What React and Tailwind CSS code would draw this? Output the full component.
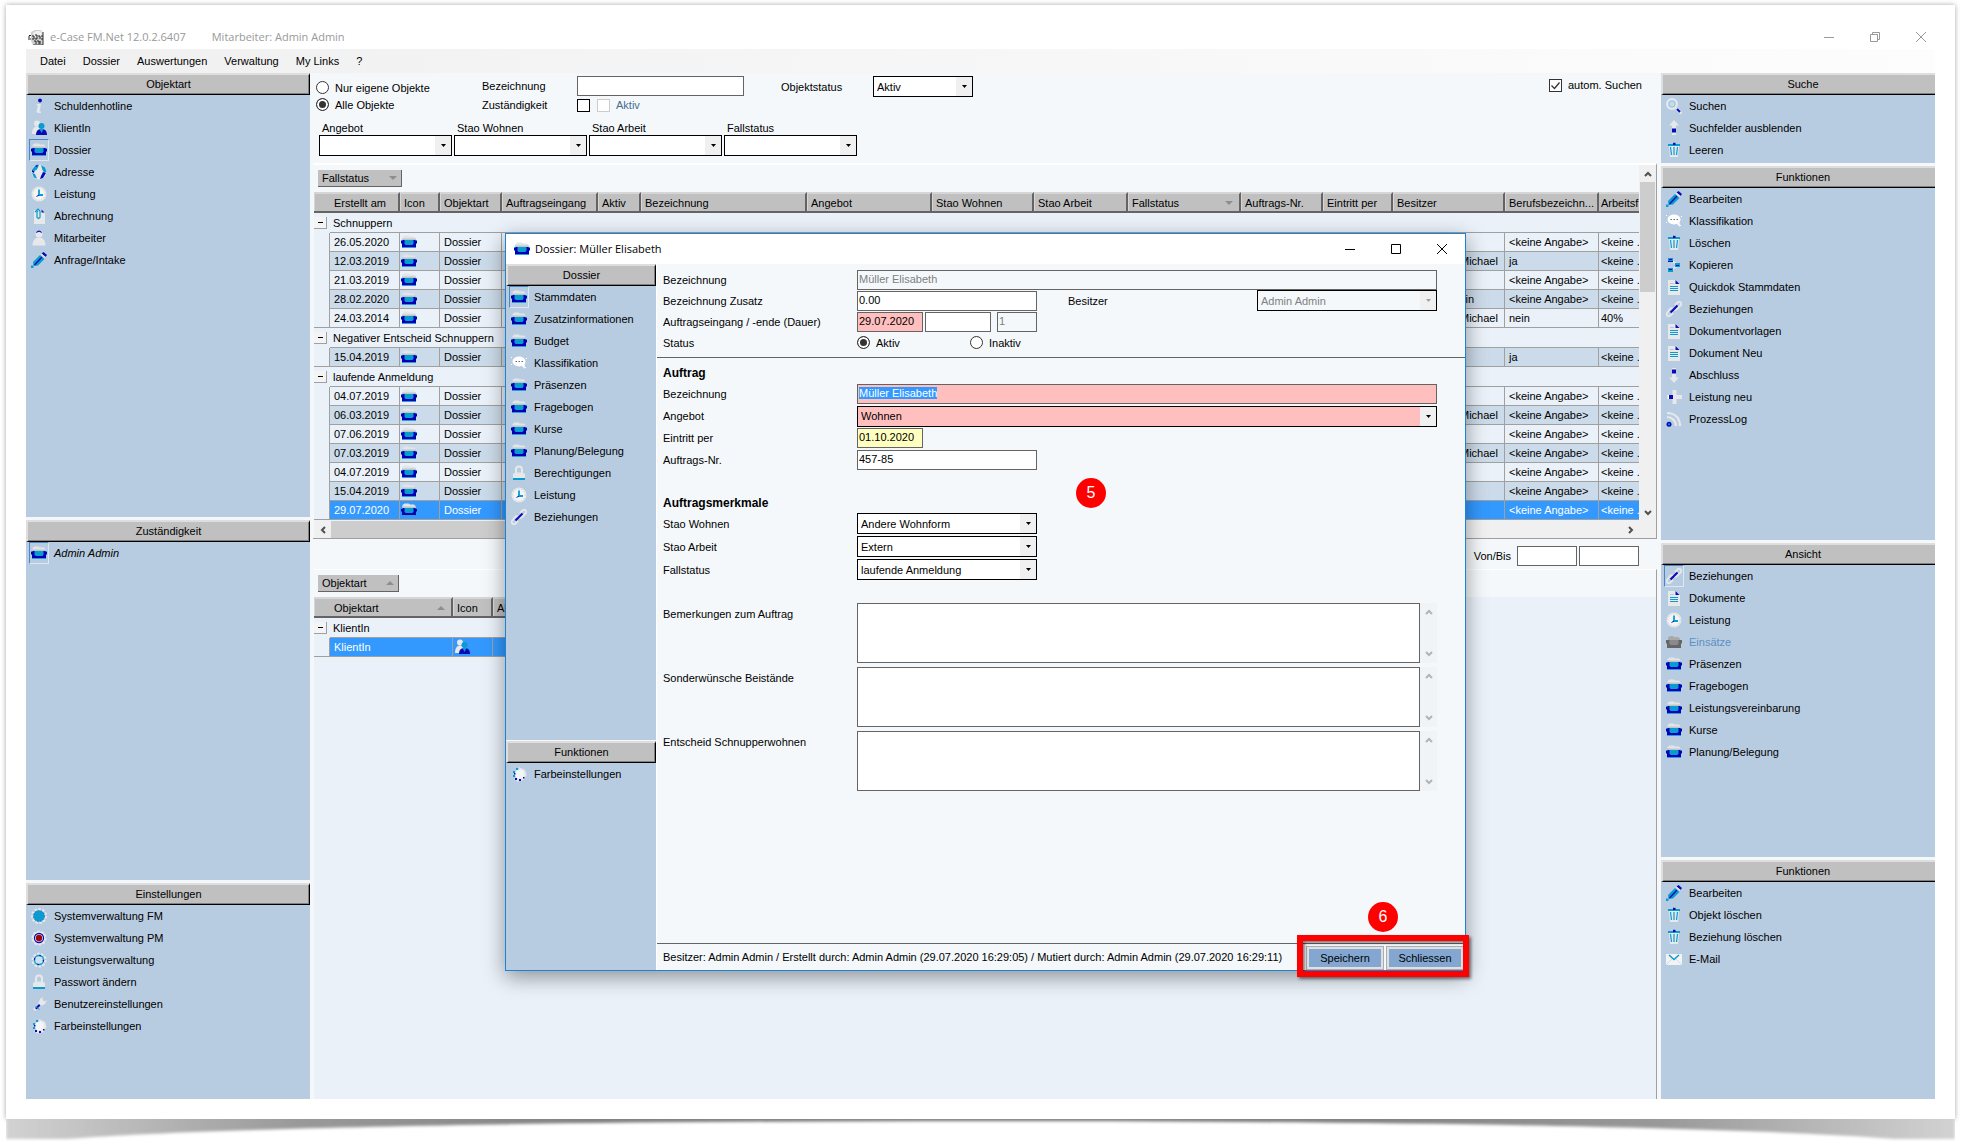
import { useEffect, useRef } from "react";

const INK = "#0a0ab8";
const CYAN = "#0a9bd0";
const PALE = "#e6e8ea";

const drawings = {
  folder: (
    <>
      <path d="M1.500 6V3L3.500 1.500h4L9 2.500h4L14.500 4v2z" fill="#e2e5e7" />
      <path d="M1 4.500h14V6H1z" fill="#c0c5c9" />
      <path d="M0 6h16v3.500h-1V14H1V9.500H0z" fill="#0000b4" />
      <path d="M3.500 6h9v3.500L11.500 11h-7l-1-1.500z" fill={CYAN} />
      <path d="M1 13h14v1H1zM0 6h1.500v1H0zM14.500 6H16v1h-1.500z" fill="#2e9bd8" />
    </>
  ),
  folderGrey: (
    <>
      <path d="M2 6V3.500L4 2h3l1 1h4l2 1.500V6z" fill="#a9a9a9" />
      <path d="M0 6h16v3.500h-1V14H1V9.500H0z" fill="#666" />
      <path d="M3.500 6h9v3.500L11.500 11h-7l-1-1.500z" fill="#8b8b8b" />
    </>
  ),
  info: (
    <>
      <circle cx="9" cy="2.500" r="1.900" fill={INK} />
      <path d="M6 6h4l-1.500 7.500H10V15H6.500l-1-1.500L7 7.500H5.500z" fill={PALE} />
    </>
  ),
  people: (
    <>
      <circle cx="6" cy="3.500" r="3" fill={PALE} />
      <path d="M1 14c0-5 2-7.500 5-7.500S10 9 10 14z" fill={PALE} />
      <circle cx="10.500" cy="6" r="3" fill={CYAN} />
      <path d="M5 15c0-4 2-6 5.500-6s5.500 2 5.500 6z" fill={INK} />
      <path d="M8.500 9h4l-2 4z" fill={CYAN} />
    </>
  ),
  globe: (
    <>
      <circle cx="8" cy="8" r="7.500" fill={PALE} />
      <path d="M8 .500 4 2 1 5.500l2 1.500 2.500-1L7 3.500z M10 1l4 2.500 1.500 4-2 1.500-2-3z M1 9l3 1 2 4.500-3-1z" fill={CYAN} />
      <path d="M1 6l2.500 1L3 9 1 8z M12 8l3 1-3 5-3 1 1-3z M4 2l3-1.500L6 3z" fill={INK} />
    </>
  ),
  clock: (
    <>
      <circle cx="8" cy="8" r="7.500" fill={PALE} />
      <circle cx="8" cy="8" r="6" fill="#f4f5f6" stroke="#cfd3d6" strokeDasharray="1 2" />
      <path d="M8 3.500V9h4" fill="none" stroke={CYAN} strokeWidth="1.800" />
      <path d="M8 9l-2.500 1.500" stroke={INK} strokeWidth="1" />
    </>
  ),
  clip: (
    <>
      <path d="M3 2h8l3 3v11H3z" fill={PALE} />
      <path d="M10.500 1.500l3 3h-3z" fill={INK} />
      <path d="M4 4l3-3 2 2v6.500l-1.500 1L6 9.500V4l1-1" fill="none" stroke={CYAN} strokeWidth="1.200" />
    </>
  ),
  person: (
    <>
      <circle cx="8" cy="4" r="3.500" fill={PALE} />
      <path d="M1.500 15.500c0-5 2.500-8 6.500-8s6.500 3 6.500 8z" fill={PALE} />
      <path d="M5 3c.5-3.500 5.500-3.500 6 0L8 1.800z" fill={INK} />
    </>
  ),
  pencil: (
    <>
      <path d="M10.500 1.500L12.500 0l3.500 3-1.500 2z" fill={INK} />
      <path d="M9.500 2.500l1-1 4 3.500-1 1z" fill={PALE} />
      <path d="M9 3l4.500 4L7 13.500 2.500 14 2 10z" fill={CYAN} />
      <path d="M11 5l-7.500 8" stroke={INK} strokeWidth="1.200" />
      <path d="M0 13.500h2.500V16H0z" fill={CYAN} />
    </>
  ),
  speech: (
    <>
      <ellipse cx="8" cy="6.500" rx="6.500" ry="5" fill="#fff" />
      <path d="M10 10l4 4-.5-5z" fill="#fff" />
      <path d="M4.500 6h1.500v1H4.500zM7.500 6H9v1H7.500zM10.500 6H12v1h-1.500z" fill="#58707e" />
      <path d="M0 2h1v1H0zM15 3h1v1h-1zM0 9h1v1H0zM14 12h1v1h-1z" fill="#fff" />
    </>
  ),
  lock: (
    <>
      <path d="M5 8V4.500C5 .500 11 .500 11 4.500V8" fill="none" stroke={PALE} strokeWidth="2" />
      <path d="M2 9c2-2 10-2 12 0v6H2z" fill={PALE} />
      <path d="M2 13h12v2H2z" fill={CYAN} />
    </>
  ),
  link: (
    <>
      <path d="M9 4l3-3c2-1 4 1 3 3l-4 4c-1 1-2 1-3 0M7 8c-1-1-2-1-3 0l-3 4c-1 2 1 4 3 3l3-3" fill="none" stroke={PALE} strokeWidth="1.800" />
      <path d="M4.500 11.500l7-7" stroke={INK} strokeWidth="2" />
    </>
  ),
  gearCyan: (
    <>
      <circle cx="8" cy="8" r="7" fill="none" stroke={PALE} strokeWidth="2" strokeDasharray="2.500 1.500" />
      <circle cx="8" cy="8" r="5.500" fill={CYAN} stroke="#2b6fc0" strokeDasharray="1.500 1.500" />
    </>
  ),
  gearRed: (
    <>
      <circle cx="8" cy="8" r="6.500" fill={PALE} stroke={PALE} strokeWidth="2" strokeDasharray="2.500 1.500" />
      <circle cx="8" cy="8" r="4.500" fill="#fff" stroke={INK} strokeWidth="1.300" />
      <circle cx="8" cy="8" r="3.200" fill="#9c0808" />
    </>
  ),
  gearRing: (
    <>
      <circle cx="8" cy="8" r="6.500" fill="none" stroke={PALE} strokeWidth="2" strokeDasharray="2.500 1.500" />
      <circle cx="8" cy="8" r="4.500" fill="#cfe0ee" stroke={CYAN} strokeWidth="1.300" />
      <circle cx="8" cy="8" r="4.500" fill="none" stroke={INK} strokeWidth="1.200" strokeDasharray="1.500 5.500" />
    </>
  ),
  wrench: (
    <>
      <path d="M7 8l2-5 3-2-.5 3 2 1.500L16 4l-2 4-4 2z" fill={PALE} />
      <path d="M2 13l6-5.500 2 2L4.500 15z" fill={PALE} />
      <path d="M4 12l4-4 1.500 1.500-4 4z" fill={INK} />
      <path d="M4.500 10.500l4 3" stroke={CYAN} strokeWidth="1" />
    </>
  ),
  dots: (
    <>
      <path d="M8 1l6 3 1.500 5-3 5-6 1.500L3 13l6-5z" fill={PALE} />
      <circle cx="8.500" cy="8" r="4.500" fill="#f4f5f6" />
      <path d="M5 2h2v2H5zM2 5h2v2H2zM2 9h2v2H2z" fill={CYAN} />
      <path d="M4 12h2v2H4zM8 13h2v2H8zM12 11h1.500v1.500H12z" fill={INK} />
      <path d="M3 7h1.500v1.500H3z" fill={INK} />
    </>
  ),
  search: (
    <>
      <circle cx="6" cy="6" r="5" fill="#c9dcec" stroke={PALE} strokeWidth="2" />
      <circle cx="6" cy="6" r="3" fill="none" stroke="#8cc6dc" />
      <path d="M10.500 10.500l5 5" stroke={PALE} strokeWidth="3" />
      <path d="M11 11l3 3" stroke={INK} strokeWidth="2" />
    </>
  ),
  up: (
    <>
      <path d="M8 0l5 5.500h-3V15H6V5.500H3z" fill={PALE} />
      <path d="M6 8.500h4v4H6z" fill={INK} />
    </>
  ),
  down: (
    <>
      <path d="M8 16l5-5.500h-3V1H6v9.500H3z" fill={PALE} />
      <path d="M6 2.500h4v4H6z" fill={INK} />
    </>
  ),
  trash: (
    <>
      <path d="M3 4h10l-1 11H4z" fill={PALE} />
      <path d="M2 2h12v2H2z" fill={CYAN} />
      <path d="M7 .800h2.500V3H7z" fill={INK} />
      <path d="M4.500 5l1 8M8 5v8M11.500 5l-1 8" stroke={CYAN} strokeWidth="1.200" />
    </>
  ),
  nodes: (
    <>
      <path d="M5 3.500l6 3.500v2l-6 4" fill="none" stroke={PALE} strokeWidth="1.500" />
      <path d="M2 1h5v4H2zM9 6h5v4H9zM2 11h5v4H2z" fill={CYAN} />
      <path d="M3 2h3v1H3zM10 8h3v1h-3zM3 12h3v1H3zM2 4h5v1H2z" fill={INK} />
    </>
  ),
  doc: (
    <>
      <path d="M2 1h8l4 4v11H2z" fill={PALE} />
      <path d="M9.500 1l4 4h-4z" fill={INK} />
      <path d="M4 7.500h8M4 9.500h8M4 11.500h8" stroke={CYAN} strokeWidth="1" />
      <path d="M4 4.500h4" stroke="#a9cfe4" strokeWidth="1" />
    </>
  ),
  plus: (
    <>
      <path d="M6.500 1h4v5H16v4h-5.500v5h-4v-5H2V6h4.500z" fill={PALE} />
      <path d="M3 6h4v4H3z" fill={INK} />
      <path d="M1.500 6h1.500v4H1.500z" fill="#fff" />
    </>
  ),
  rss: (
    <>
      <path d="M1 6c5 0 9 4 9 9M1 2c8 0 13 5 13 13" fill="none" stroke={PALE} strokeWidth="2.200" />
      <circle cx="3" cy="13.200" r="2.500" fill={INK} />
      <circle cx="3" cy="13.200" r="1" fill={CYAN} />
    </>
  ),
  mail: (
    <>
      <path d="M0 3h16v11H0z" fill="#f1f3f4" />
      <path d="M3 4l5 4.500L13 4" fill="none" stroke={CYAN} strokeWidth="1.400" />
      <path d="M0 14l6-6M16 14l-6-6" stroke="#d2d6d9" strokeWidth=".8" />
    </>
  ),
};

function Icon({ name }) {
  return (
    <svg viewBox="0 0 16 16" className="size-4 shrink-0" aria-hidden="true">
      {drawings[name]}
    </svg>
  );
}

function PanelTitle({ children, open }) {
  return (
    <h2
      className={
        open
          ? "flex h-[22px] shrink-0 items-center justify-center border-t-2 border-b border-l-2 border-t-[#dedede] border-b-black border-l-[#dedede] bg-[#c0c0c0] pb-0.5 pl-2 shadow-[inset_0_-1px_0_#808080]"
          : "flex h-[22px] shrink-0 items-center justify-center border-t-2 border-r border-b border-l-2 border-t-[#dedede] border-r-black border-b-black border-l-[#dedede] bg-[#c0c0c0] pb-0.5 shadow-[inset_-1px_-1px_0_#808080]"
      }
    >
      {children}
    </h2>
  );
}

function NavList({ items, selected, disabled, italic }) {
  return (
    <ul className="min-h-0 flex-1 overflow-hidden bg-[#b8cce1]">
      {items.map(([icon, label]) => (
        <li key={label}>
          <button
            type="button"
            disabled={label === disabled}
            className="flex h-[22px] w-full items-center gap-[5px] pl-[3px] text-left disabled:text-[#5b8fc7]"
          >
            <span
              className={
                label === selected
                  ? "flex h-[22px] w-5 items-center justify-center border border-t-[#4a86c4] border-r-[#dce8f4] border-b-[#dce8f4] border-l-[#4a86c4]"
                  : "flex h-[22px] w-5 items-center justify-center"
              }
            >
              <Icon name={icon} />
            </span>
            <span className={italic ? "italic" : ""}>{label}</span>
          </button>
        </li>
      ))}
    </ul>
  );
}

function Panel({ title, open, ...list }) {
  return (
    <section className="flex min-h-0 flex-col">
      <PanelTitle open={open}>{title}</PanelTitle>
      <NavList {...list} />
    </section>
  );
}

function Combo({ label, value = "", className, disabled, tone = "bg-white" }) {
  return (
    <div className={`relative h-[21px] ${className}`}>
      <select
        aria-label={label}
        disabled={disabled}
        defaultValue={value}
        className={`block h-full w-full appearance-none border border-black pr-5 pl-[3px] outline-none disabled:text-[#808080] disabled:opacity-100 ${tone}`}
      >
        <option>{value}</option>
      </select>
      <span
        className={`pointer-events-none absolute top-px right-px flex h-[19px] w-4 items-center justify-center bg-[#f0f0f0] ${disabled ? "text-[#a0a0a0]" : "text-black"}`}
      >
        <svg viewBox="0 0 5 3" className="h-[3px] w-[5px]" fill="currentColor" aria-hidden="true">
          <path d="M0 0h5L2.500 3z" />
        </svg>
      </span>
    </div>
  );
}

const radio =
  "size-[13px] shrink-0 appearance-none rounded-full border border-[#333] bg-white checked:bg-[#333] checked:shadow-[inset_0_0_0_2px_#fff]";
const field = "h-5 border border-[#646464] px-px pb-[2px] outline-none";

/* ---------- record grids ---------- */

const columns = [
  ["Icon", 40],
  ["Objektart", 62],
  ["Auftragseingang", 96],
  ["Aktiv", 43],
  ["Bezeichnung", 166],
  ["Angebot", 125],
  ["Stao Wohnen", 102],
  ["Stao Arbeit", 94],
  ["Fallstatus", 113],
  ["Auftrags-Nr.", 82],
  ["Eintritt per", 70],
  ["Besitzer", 112],
  ["Berufsbezeichn...", 94],
  ["Arbeitsf", 40],
];

const none = "<keine Angabe>";
const groups = [
  {
    name: "Schnuppern",
    rows: [
      ["26.05.2020", "", none, none],
      ["12.03.2019", "Hugentobler Michael", "ja", none],
      ["21.03.2019", "", none, none],
      ["28.02.2020", "Brunner Kathrin", none, none],
      ["24.03.2014", "Hugentobler Michael", "nein", "40%"],
    ],
  },
  { name: "Negativer Entscheid Schnuppern", rows: [["15.04.2019", "", "ja", none, true]] },
  {
    name: "laufende Anmeldung",
    rows: [
      ["04.07.2019", "", none, none],
      ["06.03.2019", "Hugentobler Michael", none, none],
      ["07.06.2019", "", none, none],
      ["07.03.2019", "Hugentobler Michael", none, none],
      ["04.07.2019", "", none, none],
      ["15.04.2019", "", none, none],
      ["29.07.2020", "", none, none],
    ],
  },
];

const th =
  "h-[21px] overflow-hidden border-t-2 border-r-2 border-b-2 border-t-[#d6d6d6] border-r-[#646464] border-b-[#646464] bg-[#c0c0c0] p-0 pl-1 text-left font-normal whitespace-nowrap shadow-[inset_1px_0_0_#d6d6d6]";
const thLast =
  "h-[21px] border-t-2 border-b-2 border-t-[#d6d6d6] border-b-[#646464] bg-[#c0c0c0] p-0 pl-0.5 text-left font-normal whitespace-nowrap";
const td = "h-[19px] overflow-hidden border-r border-b border-[#a0a0a0] p-0 pl-1 whitespace-nowrap";
const tdLast = "h-[19px] border-b border-[#a0a0a0] p-0 pl-0.5 whitespace-nowrap";

function SortMark({ up }) {
  return (
    <svg viewBox="0 0 8 4" className="h-1 w-2" fill="#8e8e8e" aria-hidden="true">
      <path d={up ? "M0 4h8L4 0z" : "M0 0h8L4 4z"} />
    </svg>
  );
}

function GroupRow({ name, span, open = true }) {
  return (
    <tr>
      <td className="h-5 p-0 align-middle">
        <button
          type="button"
          aria-label={name}
          aria-expanded={open}
          className="block h-3 w-[13px] border-r border-b border-[#a0a0a0] bg-[#f4f4f4] text-center leading-[10px]"
        >
          <span className="mx-auto block h-px w-[5px] bg-black" />
        </button>
      </td>
      <td colSpan={span} className="h-5 border-b border-[#a0a0a0] p-0 pl-[3px] whitespace-nowrap">
        {name}
      </td>
    </tr>
  );
}

function RecordTable() {
  return (
    <table className="w-[1325px] table-fixed border-separate border-spacing-0">
      <colgroup>
        <col className="w-4" />
        <col className="w-[70px]" />
        {columns.map(([name, w]) => (
          <col key={name} style={{ width: w }} />
        ))}
      </colgroup>
      <thead>
        <tr>
          <th colSpan={2} className={`${th} pl-5`}>
            Erstellt am
          </th>
          {columns.map(([name]) => (
            <th key={name} className={name === "Arbeitsf" ? thLast : th}>
              <span className="flex items-center justify-between pr-1.5">
                {name}
                {name === "Fallstatus" && <SortMark />}
              </span>
            </th>
          ))}
        </tr>
      </thead>
      <tbody>
        {groups.map((g) => [
          <GroupRow key={g.name} name={g.name} span={columns.length + 1} />,
          ...g.rows.map(([date, owner, job, form, dark], i) => {
            const active = date === "29.07.2020";
            const shade = active
              ? "bg-[#3399ff] text-white"
              : dark || i % 2
                ? "bg-[#ccdbe9]"
                : "bg-[#eaf1f9]";
            const last = i === g.rows.length - 1;
            return (
              <tr key={g.name + i} className={shade}>
                <td
                  className={
                    last
                      ? "h-[19px] border-r border-b border-[#a0a0a0] bg-[#eaf1f9] p-0"
                      : "h-[19px] border-r border-[#a0a0a0] bg-[#eaf1f9] p-0"
                  }
                />
                <td className={td}>{date}</td>
                <td className="h-[19px] border-r border-b border-[#a0a0a0] p-0 pl-px">
                  <Icon name="folder" />
                </td>
                <td className={td}>Dossier</td>
                {columns.slice(2, 11).map(([name]) => (
                  <td key={name} className={td} />
                ))}
                <td className={td}>{owner}</td>
                <td className={td}>{job}</td>
                <td className={tdLast}>{form === none ? "<keine ." : form}</td>
              </tr>
            );
          }),
        ])}
      </tbody>
    </table>
  );
}

function RelationTable() {
  return (
    <table className="w-[260px] table-fixed border-separate border-spacing-0">
      <colgroup>
        <col className="w-4" />
        <col className="w-[123px]" />
        <col className="w-10" />
        <col />
      </colgroup>
      <thead>
        <tr>
          <th colSpan={2} className={`${th} pl-5`}>
            <span className="flex items-center justify-between pr-1.5">
              Objektart <SortMark up />
            </span>
          </th>
          <th className={th}>Icon</th>
          <th className={th}>Aktiv</th>
        </tr>
      </thead>
      <tbody>
        <GroupRow name="KlientIn" span={3} />
        <tr className="bg-[#3399ff] text-white">
          <td className="h-[19px] border-r border-b border-[#a0a0a0] bg-[#eaf1f9] p-0" />
          <td className={td}>KlientIn</td>
          <td className="h-[19px] border-r border-b border-[#a0a0a0] p-0 pl-px">
            <Icon name="people" />
          </td>
          <td className={td} />
        </tr>
      </tbody>
    </table>
  );
}

function GroupChip({ children, up }) {
  return (
    <button
      type="button"
      className="flex h-[17px] items-center justify-between border-r border-b border-[#646464] bg-[#c0c0c0] px-1"
    >
      {children} <SortMark up={up} />
    </button>
  );
}

function Chevron({ d }) {
  return (
    <svg viewBox="0 0 8 8" className="size-2" fill="none" stroke="currentColor" strokeWidth="2" aria-hidden="true">
      <path d={d} />
    </svg>
  );
}
const UP = "M1 6l3-3 3 3";
const DOWN = "M1 2l3 3 3-3";
const LEFT = "M6 1L3 4l3 3";
const RIGHT = "M2 1l3 3-3 3";

/* ---------- search area ---------- */

function Filters() {
  return (
    <div className="h-[90px] shrink-0 pl-[3px]">
      <div className="flex items-start">
        <fieldset className="flex w-[166px] flex-col pt-1.5">
          <label className="flex h-[17px] items-center gap-1.5">
            <input type="radio" name="scope" className={radio} /> Nur eigene Objekte
          </label>
          <label className="flex h-[17px] items-center gap-1.5">
            <input type="radio" name="scope" defaultChecked className={radio} /> Alle Objekte
          </label>
        </fieldset>
        <div className="grid grid-cols-[95px_204px] items-center pt-[3px]">
          <label htmlFor="f-bez">Bezeichnung</label>
          <input id="f-bez" className="h-5 w-[167px] border border-[#646464] bg-white px-1" />
          <label htmlFor="f-zust">Zuständigkeit</label>
          <div className="flex h-[18px] items-center gap-[7px]">
            <input id="f-zust" type="checkbox" className="size-[13px] appearance-none border border-black bg-white" />
            <label className="flex items-center gap-1.5 text-[#456e8e]">
              <input type="checkbox" disabled className="size-[13px] appearance-none border border-[#ccc] bg-white" />
              Aktiv
            </label>
          </div>
        </div>
        <div className="flex items-center pt-[3px]">
          <span className="w-[92px]">Objektstatus</span>
          <Combo label="Objektstatus" value="Aktiv" className="w-[100px]" />
        </div>
        <label className="relative mr-[15px] ml-auto flex items-center gap-1.5 pt-[5px]">
          <input
            type="checkbox"
            defaultChecked
            className="peer size-[13px] appearance-none border border-[#333] bg-white"
          />
          <svg
            viewBox="0 0 13 13"
            className="pointer-events-none absolute left-0 size-[13px]"
            fill="none"
            stroke="#333"
            strokeWidth="1.300"
            aria-hidden="true"
          >
            <path d="M2.500 6.500l3 3 5-6" />
          </svg>
          autom. Suchen
        </label>
      </div>
      <div className="mt-[7px] ml-[3px] flex gap-0.5">
        {["Angebot", "Stao Wohnen", "Stao Arbeit", "Fallstatus"].map((name) => (
          <div key={name} className="w-[133px]">
            <span className="block h-[14px] pl-[3px] leading-[14px]">{name}</span>
            <Combo label={name} className="w-full" />
          </div>
        ))}
      </div>
    </div>
  );
}

function Workspace() {
  return (
    <main className="flex min-w-0 flex-1 flex-col pl-[3px]">
      <Filters />
      <section className="relative flex h-[376px] shrink-0 border-t-2 border-r border-b border-t-white border-r-[#a0a0a0] border-b-[#a0a0a0]">
        <div className="flex min-w-0 flex-1 flex-col pl-px">
          <div className="grid h-[27px] shrink-0 grid-cols-[84px] items-center pl-1">
            <GroupChip>Fallstatus</GroupChip>
          </div>
          <div className="min-h-0 flex-1 overflow-hidden bg-[#eaf1f9]">
            <RecordTable />
          </div>
          <div className="flex h-[17px] shrink-0 items-stretch bg-[#f0f0f0] text-[#505050]">
            <span className="flex w-[17px] items-center justify-center">
              <Chevron d={LEFT} />
            </span>
            <span className="w-1/2 bg-[#cdcdcd]" />
            <span className="ml-auto flex w-[17px] items-center justify-center">
              <Chevron d={RIGHT} />
            </span>
          </div>
        </div>
        <div className="flex w-[17px] shrink-0 flex-col items-center bg-[#f0f0f0] pb-[17px] text-[#505050]">
          <span className="flex h-[17px] items-center">
            <Chevron d={UP} />
          </span>
          <span className="h-[110px] w-[15px] bg-[#cdcdcd]" />
          <span className="mt-auto flex h-[17px] items-center">
            <Chevron d={DOWN} />
          </span>
        </div>
      </section>
      <div className="flex h-[30px] shrink-0 items-center justify-end gap-0.5 pt-[3px] pr-[18px]">
        <label htmlFor="from" className="pr-1">
          Von/Bis
        </label>
        <input id="from" className="h-5 w-[60px] border border-[#646464] bg-white" />
        <input aria-label="Bis" className="h-5 w-[60px] border border-[#646464] bg-white" />
      </div>
      <section className="min-h-0 flex-1 border-t border-r border-t-white border-r-[#a0a0a0] pl-px">
        <div className="grid h-[27px] grid-cols-[81px] items-center pl-1">
          <GroupChip up>Objektart</GroupChip>
        </div>
        <div className="h-[calc(100%-27px)] bg-[#eaf1f9]">
          <RelationTable />
        </div>
      </section>
    </main>
  );
}

/* ---------- dossier window ---------- */

function Row({ label, children, className = "h-[22px]" }) {
  return (
    <div className={`flex items-center ${className}`}>
      <span className="w-[194px] shrink-0">{label}</span>
      {children}
    </div>
  );
}

function Memo({ label }) {
  return (
    <label className="flex pb-1">
      <span className="w-[194px] shrink-0 pt-1">{label}</span>
      <textarea className="block h-[60px] min-w-0 flex-1 resize-none border border-[#646464] bg-white outline-none" />
      <span className="flex w-[17px] shrink-0 flex-col items-center justify-between bg-[#f0f4f7] py-[5px] text-[#b4b4b4]">
        <Chevron d={UP} />
        <Chevron d={DOWN} />
      </span>
    </label>
  );
}

function DossierWindow() {
  const title = useRef(null);
  useEffect(() => {
    title.current.focus({ preventScroll: true });
    title.current.select();
  }, []);
  return (
    <div
      role="dialog"
      aria-label="Dossier: Müller Elisabeth"
      className="absolute top-[184px] left-[479px] flex h-[738px] w-[961px] flex-col border border-[#1883d7] bg-[#f4f8fb] shadow-[0_6px_20px_rgba(0,0,0,0.4)]"
    >
      <header className="flex h-[30px] shrink-0 items-center gap-[5px] bg-white pl-2 font-['Open_Sans',sans-serif] text-[11px]">
        <Icon name="folder" />
        <span>Dossier: Müller Elisabeth</span>
        <div className="mr-[18px] ml-auto flex gap-9">
          <button type="button" aria-label="Minimieren">
            <WindowGlyph d="M0 5.500h10" />
          </button>
          <button type="button" aria-label="Maximieren">
            <WindowGlyph d="M.5.5h9v9h-9z" />
          </button>
          <button type="button" aria-label="Schliessen">
            <WindowGlyph d="M0 0l10 10M10 0L0 10" />
          </button>
        </div>
      </header>
      <div className="flex min-h-0 flex-1">
        <aside className="grid w-[151px] shrink-0 grid-rows-[477fr_229fr] gap-px border-r border-white">
          <Panel
            title="Dossier"
            selected="Stammdaten"
            items={[
              ["folder", "Stammdaten"],
              ["folder", "Zusatzinformationen"],
              ["folder", "Budget"],
              ["speech", "Klassifikation"],
              ["folder", "Präsenzen"],
              ["folder", "Fragebogen"],
              ["folder", "Kurse"],
              ["folder", "Planung/Belegung"],
              ["lock", "Berechtigungen"],
              ["clock", "Leistung"],
              ["link", "Beziehungen"],
            ]}
          />
          <Panel title="Funktionen" items={[["dots", "Farbeinstellungen"]]} />
        </aside>
        <form className="flex min-w-0 flex-1 flex-col" onSubmit={(e) => e.preventDefault()}>
          <div className="border-b border-[#646464] pt-[5px] pr-7 pb-1 pl-1.5">
            <Row label="Bezeichnung" className="h-[21px]">
              <input
                aria-label="Bezeichnung"
                disabled
                defaultValue="Müller Elisabeth"
                className={`${field} min-w-0 flex-1 text-[#808080]`}
              />
            </Row>
            <Row label="Bezeichnung Zusatz" className="h-[21px]">
              <input aria-label="Bezeichnung Zusatz" defaultValue="0.00" className={`${field} w-[180px] bg-white`} />
              <span className="ml-[31px]">Besitzer</span>
              <Combo label="Besitzer" value="Admin Admin" disabled tone="bg-[#f4f8fb]" className="ml-auto w-[180px]" />
            </Row>
            <Row label="Auftragseingang / -ende (Dauer)" className="h-[21px]">
              <input aria-label="Auftragseingang" defaultValue="29.07.2020" className={`${field} w-[66px] bg-[#ffbfbf]`} />
              <input aria-label="Auftragsende" className={`${field} ml-0.5 w-[66px] bg-white`} />
              <input aria-label="Dauer" disabled defaultValue="1" className={`${field} ml-1.5 w-10 text-[#808080]`} />
            </Row>
            <Row label="Status" className="h-[21px]">
              <label className="flex w-[113px] items-center gap-1.5">
                <input type="radio" name="status" defaultChecked className={radio} /> Aktiv
              </label>
              <label className="flex items-center gap-1.5">
                <input type="radio" name="status" className={radio} /> Inaktiv
              </label>
            </Row>
          </div>
          <div className="flex-1 pt-1 pr-7 pl-1.5">
            <h3 className="flex h-[21px] items-center text-xs font-bold">Auftrag</h3>
            <Row label="Bezeichnung">
              <input
                ref={title}
                aria-label="Bezeichnung Auftrag"
                defaultValue="Müller Elisabeth"
                className={`${field} min-w-0 flex-1 bg-[#ffbfbf] selection:bg-[#3399ff] selection:text-white`}
              />
            </Row>
            <Row label="Angebot">
              <Combo label="Angebot" value="Wohnen" tone="bg-[#ffbfbf]" className="flex-1" />
            </Row>
            <Row label="Eintritt per">
              <input aria-label="Eintritt per" defaultValue="01.10.2020" className={`${field} w-[66px] bg-[#ffffbf]`} />
            </Row>
            <Row label="Auftrags-Nr.">
              <input aria-label="Auftrags-Nr." defaultValue="457-85" className={`${field} w-[180px] bg-white`} />
            </Row>
            <h3 className="mt-[22px] flex h-[19px] items-center text-xs font-bold">Auftragsmerkmale</h3>
            <Row label="Stao Wohnen" className="h-[23px]">
              <Combo label="Stao Wohnen" value="Andere Wohnform" className="w-[180px]" />
            </Row>
            <Row label="Stao Arbeit" className="h-[23px]">
              <Combo label="Stao Arbeit" value="Extern" className="w-[180px]" />
            </Row>
            <Row label="Fallstatus" className="h-[23px]">
              <Combo label="Fallstatus" value="laufende Anmeldung" className="w-[180px]" />
            </Row>
            <div className="pt-[22px]">
              <Memo label="Bemerkungen zum Auftrag" />
              <Memo label="Sonderwünsche Beistände" />
              <Memo label="Entscheid Schnupperwohnen" />
            </div>
          </div>
          <footer className="flex h-[27px] shrink-0 items-center justify-between border-t border-[#646464] pl-1.5">
            <span>
              Besitzer: Admin Admin / Erstellt durch: Admin Admin (29.07.2020 16:29:05) / Mutiert durch: Admin Admin
              (29.07.2020 16:29:11)
            </span>
            <div className="flex gap-1 pt-px pr-0.5">
              {["Speichern", "Schliessen"].map((t) => (
                <button
                  key={t}
                  type="button"
                  className="h-[22px] w-[76px] border-2 border-[#e0e0e0] bg-[#84a7d1] shadow-[0_0_0_1px_#a9adb3]"
                >
                  {t}
                </button>
              ))}
            </div>
          </footer>
        </form>
      </div>
      <span className="absolute top-[244px] left-[570px] flex size-[30px] items-center justify-center rounded-full bg-[red] text-base text-white">
        5
      </span>
      <span className="absolute right-[67px] bottom-[38px] flex size-[30px] items-center justify-center rounded-full bg-[red] text-base text-white">
        6
      </span>
      <div className="pointer-events-none absolute -right-1 -bottom-[7px] h-[42px] w-[172px] border-[6px] border-[red] shadow-[2px_2px_3px_rgba(0,0,0,0.5),inset_2px_2px_3px_rgba(0,0,0,0.5)]" />
    </div>
  );
}

function WindowGlyph({ d }) {
  return (
    <svg viewBox="0 0 10 10" className="size-2.5 overflow-visible" fill="none" stroke="currentColor" aria-hidden="true">
      <path d={d} />
    </svg>
  );
}

export default function App() {
  return (
    <div className="flex min-h-screen flex-col bg-white pt-[5px] pr-[14px] pl-1.5 font-['Liberation_Sans',Arial,sans-serif] text-[11px] leading-[14px] text-black">
      <div className="flex flex-1 flex-col bg-white px-5 pt-3 pb-5 shadow-[0_0_5px_rgba(0,0,0,0.35)]">
        <header className="flex h-8 shrink-0 items-center gap-1.5 pt-2 pl-0.5 font-['Open_Sans',sans-serif] text-[#999]">
          <svg viewBox="0 0 16 16" className="size-4" aria-hidden="true">
            <path d="M3 3l4-2h6l2 3v12H5l-2-4z" fill="#cfcfcf" />
            <path d="M5 4l3-2h5l1 3v3H6z" fill="#efefef" />
            <path d="M15 3v13H5" fill="none" stroke="#333" />
            <path d="M0 8h2M0 10h3M1 6.500h2M4 7h2v3H4M7 6h2v4H7M10 7h2v3M13 7h2M13 10h2M6 12h2v3M9 12h2v3M12 12v3" stroke="#222" fill="none" />
          </svg>
          <span>e-Case FM.Net 12.0.2.6407</span>
          <span className="ml-5">Mitarbeiter: Admin Admin</span>
          <div className="mr-[9px] ml-auto flex gap-9">
            <button type="button" aria-label="Minimieren">
              <WindowGlyph d="M0 5.500h10" />
            </button>
            <button type="button" aria-label="Wiederherstellen">
              <WindowGlyph d="M.5 2.500h7v7h-7zM2.500 2.500v-2h7v7h-2" />
            </button>
            <button type="button" aria-label="Schliessen">
              <WindowGlyph d="M0 0l10 10M10 0L0 10" />
            </button>
          </div>
        </header>
        <div className="relative flex flex-1 flex-col bg-[#f4f8fb]">
          <nav className="flex h-6 shrink-0 items-center gap-[17px] bg-linear-to-r from-[#f0f0f0] to-[#fdfdfd] pl-[14px]">
            {["Datei", "Dossier", "Auswertungen", "Verwaltung", "My Links", "?"].map((m) => (
              <button key={m} type="button">
                {m}
              </button>
            ))}
          </nav>
          <div className="flex flex-1">
            <aside className="grid w-[284px] shrink-0 grid-rows-[444fr_360fr_216fr] gap-[3px]">
              <Panel
                title="Objektart"
                selected="Dossier"
                items={[
                  ["info", "Schuldenhotline"],
                  ["people", "KlientIn"],
                  ["folder", "Dossier"],
                  ["globe", "Adresse"],
                  ["clock", "Leistung"],
                  ["clip", "Abrechnung"],
                  ["person", "Mitarbeiter"],
                  ["pencil", "Anfrage/Intake"],
                ]}
              />
              <Panel title="Zuständigkeit" selected="Admin Admin" italic items={[["folder", "Admin Admin"]]} />
              <Panel
                title="Einstellungen"
                items={[
                  ["gearCyan", "Systemverwaltung FM"],
                  ["gearRed", "Systemverwaltung PM"],
                  ["gearRing", "Leistungsverwaltung"],
                  ["lock", "Passwort ändern"],
                  ["wrench", "Benutzereinstellungen"],
                  ["dots", "Farbeinstellungen"],
                ]}
              />
            </aside>
            <Workspace />
            <aside className="ml-1 grid w-[274px] shrink-0 grid-rows-[90fr_374fr_314fr_239fr] gap-[3px]">
              <Panel
                title="Suche"
                open
                items={[
                  ["search", "Suchen"],
                  ["up", "Suchfelder ausblenden"],
                  ["trash", "Leeren"],
                ]}
              />
              <Panel
                title="Funktionen"
                open
                items={[
                  ["pencil", "Bearbeiten"],
                  ["speech", "Klassifikation"],
                  ["trash", "Löschen"],
                  ["nodes", "Kopieren"],
                  ["doc", "Quickdok Stammdaten"],
                  ["link", "Beziehungen"],
                  ["doc", "Dokumentvorlagen"],
                  ["doc", "Dokument Neu"],
                  ["down", "Abschluss"],
                  ["plus", "Leistung neu"],
                  ["rss", "ProzessLog"],
                ]}
              />
              <Panel
                title="Ansicht"
                open
                selected="Beziehungen"
                disabled="Einsätze"
                items={[
                  ["link", "Beziehungen"],
                  ["doc", "Dokumente"],
                  ["clock", "Leistung"],
                  ["folderGrey", "Einsätze"],
                  ["folder", "Präsenzen"],
                  ["folder", "Fragebogen"],
                  ["folder", "Leistungsvereinbarung"],
                  ["folder", "Kurse"],
                  ["folder", "Planung/Belegung"],
                ]}
              />
              <Panel
                title="Funktionen"
                open
                items={[
                  ["pencil", "Bearbeiten"],
                  ["trash", "Objekt löschen"],
                  ["trash", "Beziehung löschen"],
                  ["mail", "E-Mail"],
                ]}
              />
            </aside>
          </div>
          <DossierWindow />
        </div>
      </div>
      <svg viewBox="0 0 1949 29" preserveAspectRatio="none" className="block h-[29px] w-full shrink-0" aria-hidden="true">
        <defs>
          <linearGradient id="curl">
            <stop offset="0" stopColor="#d2d2d2" />
            <stop offset=".15" stopColor="#999" />
            <stop offset=".3" stopColor="#808280" />
            <stop offset=".7" stopColor="#808280" />
            <stop offset=".85" stopColor="#999" />
            <stop offset="1" stopColor="#d2d2d2" />
          </linearGradient>
          <filter id="soft" x="-1%" y="-20%" width="102%" height="150%">
            <feGaussianBlur stdDeviation="1.500" />
          </filter>
        </defs>
        <path d="M0-4H1949V20H1890C1600 -4 350 -4 60 20H0z" fill="url(#curl)" filter="url(#soft)" />
      </svg>
    </div>
  );
}
